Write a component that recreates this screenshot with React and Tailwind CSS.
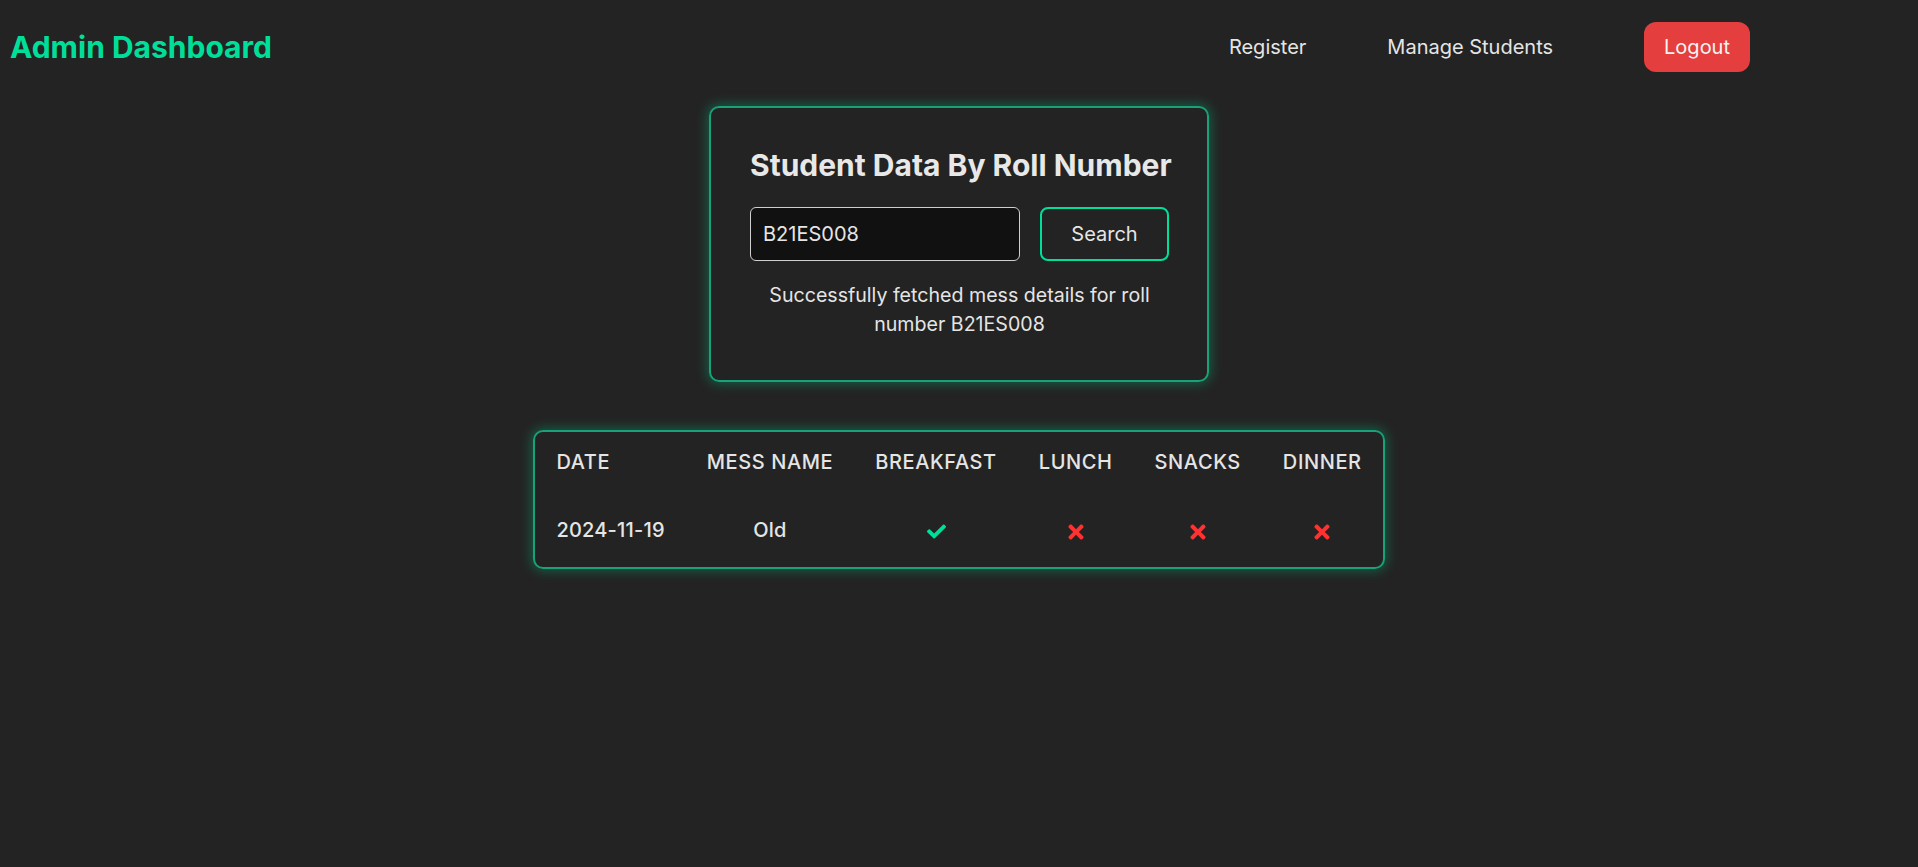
import React, { useState } from 'react';
import { FaCheck, FaTimes } from 'react-icons/fa';

const rows = [
  { date: '2024-11-19', mess: 'Old', breakfast: true, lunch: false, snacks: false, dinner: false },
];

function Mark({ ok }) {
  return ok ? (
    <FaCheck className="inline-block text-[#00df9a]" size={19} />
  ) : (
    <FaTimes className="inline-block text-[#ff3131]" size={22} />
  );
}

export default function App() {
  const [roll, setRoll] = useState('B21ES008');

  return (
    <div className="min-h-screen bg-[#232323] font-['Inter',sans-serif] text-[#e5e5e5]">
      {/* Navbar */}
      <header className="flex h-[94px] items-center justify-between pl-[10px] pr-[168px]">
        <h1 className="text-[30px] font-bold text-[#00df9a]">Admin Dashboard</h1>
        <nav className="flex items-center text-xl">
          <a className="cursor-pointer">Register</a>
          <a className="ml-[81px] cursor-pointer">Manage Students</a>
          <button className="ml-[91px] h-[50px] rounded-xl bg-[#e53e3e] px-5 text-xl text-[#f3f3f3]">
            Logout
          </button>
        </nav>
      </header>

      <main className="flex flex-col items-center">
        {/* Search card */}
        <section className="mt-[12px] w-[500px] rounded-[10px] border-2 border-[#17a277] pr-[38px] pl-[39px] pt-[39px] pb-[41px] shadow-[0_0_12px_2px_rgba(0,200,140,0.35)]">
          <h2 className="text-center text-[30px] leading-[36px] font-bold whitespace-nowrap text-[#e8e8e8]">
            Student Data By Roll Number
          </h2>
          <div className="mt-[24px] flex gap-5">
            <input
              value={roll}
              onChange={(e) => setRoll(e.target.value)}
              className="h-[54px] w-[270px] rounded-md border border-[#cfcfcf] bg-[#111111] px-3 text-xl text-[#e5e5e5] outline-none"
            />
            <button className="h-[54px] w-[130px] rounded-lg border-2 border-[#00df9a] text-xl text-[#e5e5e5]">
              Search
            </button>
          </div>
          <p className="mt-[20px] text-center text-[19.6px] leading-[29px] text-[#e5e5e5]">
            Successfully fetched mess details for roll number B21ES008
          </p>
        </section>

        {/* Results table */}
        <div className="mt-[48px] rounded-[10px] border-2 border-[#17a277] shadow-[0_0_12px_2px_rgba(0,200,140,0.35)]">
          <table className="border-collapse">
            <thead>
              <tr className="text-xl font-medium tracking-[0.03em] uppercase">
                <th className="px-[21px] pt-[16px] pb-[15px] text-left font-medium">Date</th>
                <th className="px-[21px] pt-[16px] pb-[15px] text-center font-medium">Mess Name</th>
                <th className="px-[21px] pt-[16px] pb-[15px] text-center font-medium">Breakfast</th>
                <th className="px-[21px] pt-[16px] pb-[15px] text-center font-medium">Lunch</th>
                <th className="px-[21px] pt-[16px] pb-[15px] text-center font-medium">Snacks</th>
                <th className="px-[21px] pt-[16px] pb-[15px] text-center font-medium">Dinner</th>
              </tr>
            </thead>
            <tbody>
              {rows.map((r) => (
                <tr key={r.date} className="text-xl font-medium tracking-[0.01em]">
                  <td className="px-[21px] pt-[25px] pb-[23px] text-left">{r.date}</td>
                  <td className="px-[21px] pt-[25px] pb-[23px] text-center">{r.mess}</td>
                  <td className="px-[21px] pt-[25px] pb-[23px] text-center"><Mark ok={r.breakfast} /></td>
                  <td className="px-[21px] pt-[25px] pb-[23px] text-center"><Mark ok={r.lunch} /></td>
                  <td className="px-[21px] pt-[25px] pb-[23px] text-center"><Mark ok={r.snacks} /></td>
                  <td className="px-[21px] pt-[25px] pb-[23px] text-center"><Mark ok={r.dinner} /></td>
                </tr>
              ))}
            </tbody>
          </table>
        </div>
      </main>
    </div>
  );
}
